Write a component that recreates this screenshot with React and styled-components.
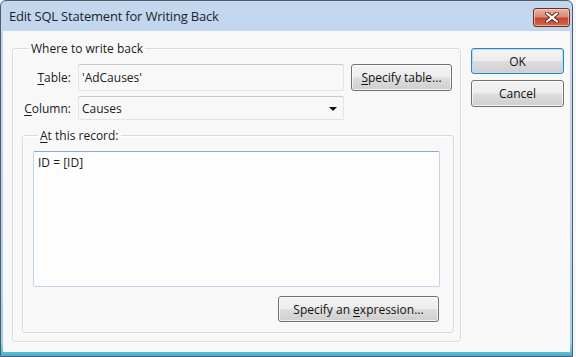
import React from 'react'
import styled, { createGlobalStyle, css } from 'styled-components'

const GlobalStyle = createGlobalStyle`
  html, body {
    margin: 0;
    padding: 0;
    background: #f4f6f8;
  }
  body {
    font-family: "Open Sans", "Noto Sans", sans-serif;
    font-size: 12px;
    color: #1b1b1b;
  }
`

const Window = styled.div`
  width: 573px;
  height: 357px;
  box-sizing: border-box;
  display: flex;
  flex-direction: column;
  border: 1px solid #4d5d6e;
  border-radius: 6px 6px 0 0;
  background: linear-gradient(to bottom, #c3d8ee 0%, #bcd2ea 60%, #9fd2e4 96%, #45b3d0 100%);
  overflow: hidden;
`

const TitleBar = styled.div`
  height: 30px;
  flex: none;
  display: flex;
  align-items: center;
  justify-content: space-between;
  padding: 0 2px 0 8px;
`

const Title = styled.div`
  font-size: 13px;
  letter-spacing: -0.2px;
  color: #1a1f2a;
  padding-bottom: 1px;
`

const CloseButton = styled.div`
  width: 37px;
  height: 19px;
  margin-top: 2px;
  box-sizing: border-box;
  border: 1px solid #6d2d22;
  border-radius: 3px;
  background: linear-gradient(to bottom, #eab4a6 0%, #dc8a78 45%, #c6452d 55%, #d2694e 100%);
  box-shadow: inset 0 0 0 1px rgba(255, 220, 210, 0.6);
  display: flex;
  align-items: center;
  justify-content: center;
`

const Client = styled.div`
  flex: 1;
  margin: 0 2px 4px 2px;
  background: #f8f8f9;
  display: flex;
  align-items: flex-start;
  padding: 10px 0 0 9px;
  gap: 10px;
`

const Group = styled.fieldset`
  margin: 0;
  box-sizing: border-box;
  border: 1px solid #d5dbe0;
  border-radius: 3px;
  box-shadow: inset 1px 1px 0 #ffffff, 1px 1px 0 #ffffff;
  min-width: 0;
  ${({ $outer }) => $outer ? css`
    width: 449px;
    height: 301px;
    padding: 7px 7px 7px 9px;
  ` : css`
    width: 432px;
    height: 205px;
    padding: 7px 13px 10px 10px;
    margin-top: 8px;
  `}
`

const Legend = styled.legend`
  padding: 0 2px;
  margin-left: ${({ $indent }) => $indent}px;
  line-height: 15px;
`

const Key = styled.span`
  text-decoration: underline;
  text-underline-offset: 2px;
`

const Form = styled.div`
  display: grid;
  grid-template-columns: 49px 266px 101px;
  column-gap: 7px;
  row-gap: 5px;
  align-items: center;
  margin-top: 1px;
`

const Label = styled.div`
  text-align: right;
`

const ReadBox = styled.div`
  height: ${({ $h }) => $h}px;
  box-sizing: border-box;
  border: 1px solid #e4e4e6;
  border-top-color: #c9c9cc;
  border-radius: 2px;
  display: flex;
  align-items: center;
  justify-content: space-between;
  padding: 0 6px 0 3px;
`

const Arrow = styled.div`
  width: 0;
  height: 0;
  border-left: 4px solid transparent;
  border-right: 4px solid transparent;
  border-top: 4px solid #111;
  margin-top: 1px;
`

const Button = styled.button`
  font: inherit;
  color: #111;
  box-sizing: border-box;
  height: ${({ $h }) => $h || 26}px;
  width: ${({ $w }) => $w}px;
  padding: 0;
  border: 1px solid ${({ $default }) => $default ? '#3c7fb1' : '#707070'};
  border-radius: 3px;
  background: linear-gradient(to bottom, #f4f4f4 0%, #ececec 48%, #dddddd 52%, #cfcfcf 100%);
  box-shadow: inset 0 0 0 1px ${({ $default }) => $default ? '#a8e4f8' : 'rgba(255,255,255,0.7)'};
  cursor: default;
`

const Side = styled.div`
  display: flex;
  flex-direction: column;
  gap: 6px;
  padding-top: 7px;
`

const Expression = styled.div`
  width: 407px;
  height: 136px;
  box-sizing: border-box;
  border: 1px solid #c2d4e8;
  border-top-color: #8eaacb;
  border-radius: 2px;
  background: #fdfdfd;
  padding: 2px 4px;
  margin-top: 1px;
`

const Footer = styled.div`
  display: flex;
  justify-content: flex-end;
  margin-top: 9px;
  padding-right: 1px;
`

const CloseGlyph = () => (
  <svg width="14" height="11" viewBox="0 0 14 11">
    <path d="M2 1.5 L12 9.5 M12 1.5 L2 9.5" stroke="#5a2a22" strokeWidth="4" strokeLinecap="round" />
    <path d="M2 1.5 L12 9.5 M12 1.5 L2 9.5" stroke="#ffffff" strokeWidth="2.2" strokeLinecap="round" />
  </svg>
)

export default function App() {
  return (
    <>
      <GlobalStyle />
      <Window>
        <TitleBar>
          <Title>Edit SQL Statement for Writing Back</Title>
          <CloseButton><CloseGlyph /></CloseButton>
        </TitleBar>
        <Client>
          <Group $outer>
            <Legend $indent={7}>Where to write back</Legend>
            <Form>
              <Label><Key>T</Key>able:</Label>
              <ReadBox $h={27}>'AdCauses'</ReadBox>
              <Button $w={101} $h={27}><Key>S</Key>pecify table...</Button>
              <Label><Key>C</Key>olumn:</Label>
              <ReadBox $h={24}>Causes<Arrow /></ReadBox>
              <div />
            </Form>
            <Group>
              <Legend $indent={5}><Key>A</Key>t this record:</Legend>
              <Expression>ID = [ID]</Expression>
              <Footer>
                <Button $w={161}>Specify an <Key>e</Key>xpression...</Button>
              </Footer>
            </Group>
          </Group>
          <Side>
            <Button $w={93} $default>OK</Button>
            <Button $w={93} $h={27}>Cancel</Button>
          </Side>
        </Client>
      </Window>
    </>
  )
}
